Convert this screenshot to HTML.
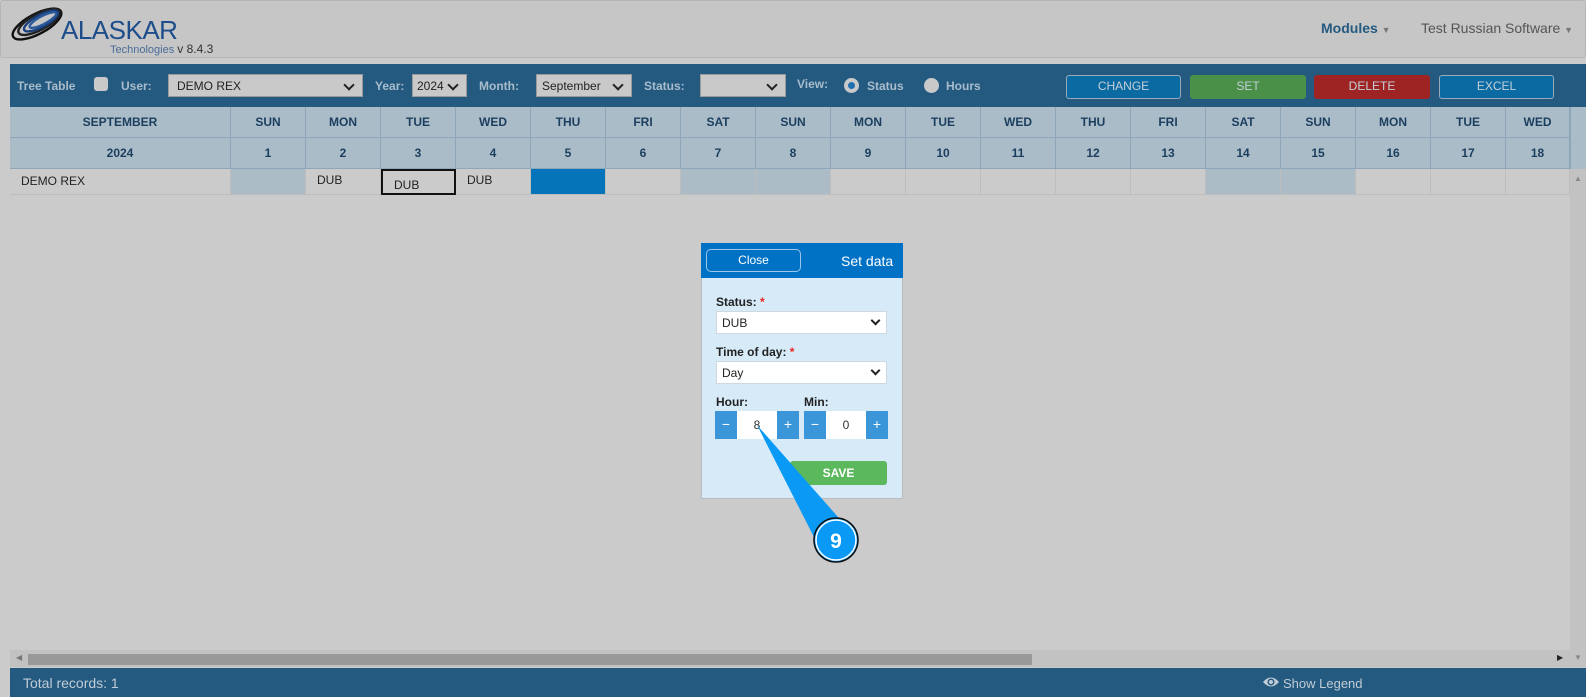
<!DOCTYPE html>
<html><head><meta charset="utf-8"><style>
*{box-sizing:border-box;margin:0;padding:0}
body{width:1586px;height:697px;background:#cbcbcb;font-family:"Liberation Sans",Arial,sans-serif;position:relative;overflow:hidden;font-size:12px}
.a{position:absolute}
.hdr{left:0;top:0;width:1586px;height:58px;background:#c6c6c6;border:1px solid #b5b5b5;border-radius:3px}
.tb{left:10px;top:64px;width:1576px;height:43px;background:#245a80}
.tl{color:#a9bccb;font-weight:bold;font-size:12px;top:79px}
.sel{background:#c9c9c9;border:1px solid #9a9a9a;top:74px;height:23px;font-size:12px;color:#222;padding:4px 8px}
.sel:after{content:"";position:absolute;right:9px;top:6px;width:6px;height:6px;border-right:2px solid #222;border-bottom:2px solid #222;transform:rotate(45deg)}
.btn{top:75px;height:24px;border-radius:3px;color:#c5cfd8;font-size:12px;text-align:center;line-height:20px}
.c{border-right:1px solid #8ea6ba;border-bottom:1px solid #8ea6ba;background:#a9bcc8;color:#1c3e5e;font-weight:bold;font-size:12px;text-align:center}
.d{border-right:1px solid #bdbdbd;border-bottom:1px solid #bdbdbd;font-size:12px;color:#222}
.pl{font-weight:bold;color:#222;font-size:12px}
.ps{background:#fff;border:1px solid #cfd8de;height:23px;padding:4px 5px;font-size:12px;color:#222}
.ps:after{content:"";position:absolute;right:7px;top:5px;width:5px;height:5px;border-right:2px solid #222;border-bottom:2px solid #222;transform:rotate(45deg)}
.pm{background:#3a96d8;color:#fff;text-align:center;line-height:27px;font-size:14px;height:28px}
.pi{background:#fff;text-align:center;line-height:28px;height:28px;color:#333;font-size:12px}
</style></head><body>
<div class="a hdr"></div>
<svg class="a" style="left:9px;top:5px" width="56" height="38" viewBox="0 0 56 38">
<g fill="none" stroke-width="2.4">
<ellipse cx="28" cy="19" rx="27" ry="10" transform="rotate(-28 28 19)" stroke="#111"/>
<ellipse cx="30" cy="17" rx="23" ry="8" transform="rotate(-28 30 17)" stroke="#222"/>
<ellipse cx="32" cy="16" rx="19" ry="6" transform="rotate(-28 32 16)" stroke="#1a3f7a"/>
<ellipse cx="34" cy="15" rx="15" ry="4" transform="rotate(-28 34 15)" stroke="#2a5a9a"/>
</g></svg>
<div class="a" style="left:61px;top:15px;font-size:26px;color:#1d4d8a;letter-spacing:-0.5px">ALASKAR</div>
<div class="a" style="left:110px;top:42px;font-size:11px;color:#4a6c9a">Technologies <span style="color:#333;font-size:12px">v 8.4.3</span></div>
<div class="a" style="left:1321px;top:20px;font-size:14px;font-weight:bold;color:#245a80">Modules <span style="font-size:9px;color:#777">▼</span></div>
<div class="a" style="left:1421px;top:20px;font-size:14px;color:#555">Test Russian Software <span style="font-size:9px;color:#777">▼</span></div>

<div class="a tb"></div>
<div class="a tl" style="left:17px">Tree Table</div>
<div class="a" style="left:94px;top:77px;width:14px;height:14px;background:#c9c9c9;border-radius:3px"></div>
<div class="a tl" style="left:121px">User:</div>
<div class="a sel" style="left:168px;width:195px">DEMO REX</div>
<div class="a tl" style="left:375px">Year:</div>
<div class="a sel" style="left:412px;width:55px;padding-left:4px">2024</div>
<div class="a tl" style="left:479px">Month:</div>
<div class="a sel" style="left:536px;width:96px;padding-left:5px">September</div>
<div class="a tl" style="left:644px">Status:</div>
<div class="a sel" style="left:700px;width:86px"></div>
<div class="a tl" style="left:797px;top:77px">View:</div>
<div class="a" style="left:844px;top:78px;width:15px;height:15px;border-radius:50%;background:#c9c9c9"><div class="a" style="left:4px;top:4px;width:7px;height:7px;border-radius:50%;background:#1f6fb0"></div></div>
<div class="a tl" style="left:867px">Status</div>
<div class="a" style="left:924px;top:78px;width:15px;height:15px;border-radius:50%;background:#c9c9c9"></div>
<div class="a tl" style="left:946px">Hours</div>
<div class="a btn" style="left:1066px;width:115px;background:#0c6aa3;border:1px solid #9ab">CHANGE</div>
<div class="a btn" style="left:1190px;width:116px;background:#4a9048;line-height:22px">SET</div>
<div class="a btn" style="left:1314px;width:116px;background:#9e2424;line-height:22px">DELETE</div>
<div class="a btn" style="left:1439px;width:115px;background:#0c6aa3;border:1px solid #9ab">EXCEL</div>

<div class="a c" style="left:10px;top:107px;width:221px;height:31px;line-height:30px">SEPTEMBER</div>
<div class="a c" style="left:10px;top:138px;width:221px;height:31px;line-height:30px">2024</div>
<div class="a d" style="left:10px;top:169px;width:221px;height:26px;line-height:25px;padding-left:11px">DEMO REX</div>
<div id="cols"></div>
<div class="a" style="left:1570px;top:107px;width:16px;height:62px;background:#a9bcc8;border-left:1px solid #8ea6ba"></div>
<div class="a" style="left:1570px;top:169px;width:16px;height:481px;background:#c2c2c2"></div>
<div class="a" style="left:1574px;top:174px;font-size:8px;color:#888">▲</div>
<div class="a" style="left:10px;top:650px;width:1576px;height:17px;background:#c2c2c2"></div>
<div class="a" style="left:28px;top:654px;width:1004px;height:11px;background:#999"></div>
<div class="a" style="left:16px;top:653px;font-size:8px;color:#777">◀</div>
<div class="a" style="left:1557px;top:653px;font-size:8px;color:#222">▶</div>
<div class="a" style="left:1574px;top:653px;font-size:8px;color:#888">▼</div>
<div class="a" style="left:10px;top:668px;width:1576px;height:29px;background:#245a80"></div>
<div class="a" style="left:23px;top:675px;font-size:14px;color:#c0ccd6">Total records: 1</div>
<svg class="a" style="left:1262px;top:676px" width="18" height="12" viewBox="0 0 18 12"><path d="M1 6Q9 -3 17 6Q9 15 1 6Z" fill="#c0ccd6"/><circle cx="9" cy="6" r="3.5" fill="#245a80"/><circle cx="9" cy="6" r="2" fill="#c0ccd6"/></svg>
<div class="a" style="left:1283px;top:676px;font-size:13px;color:#c0ccd6">Show Legend</div>

<div class="a" style="left:701px;top:243px;width:202px;height:256px;background:#d6eaf8;border:1px solid #bbb"></div>
<div class="a" style="left:701px;top:243px;width:202px;height:35px;background:#0072c6"></div>
<div class="a" style="left:706px;top:249px;width:95px;height:23px;border:1px solid #9cc7ea;border-radius:5px;color:#fff;font-size:12px;text-align:center;line-height:20px">Close</div>
<div class="a" style="left:841px;top:253px;color:#fff;font-size:14px">Set data</div>
<div class="a pl" style="left:716px;top:295px">Status: <span style="color:#e22">*</span></div>
<div class="a ps" style="left:716px;top:311px;width:171px">DUB</div>
<div class="a pl" style="left:716px;top:345px">Time of day: <span style="color:#e22">*</span></div>
<div class="a ps" style="left:716px;top:361px;width:171px">Day</div>
<div class="a pl" style="left:716px;top:395px">Hour:</div>
<div class="a pl" style="left:804px;top:395px">Min:</div>
<div class="a pm" style="left:715px;top:411px;width:22px">−</div>
<div class="a pi" style="left:737px;top:411px;width:40px">8</div>
<div class="a pm" style="left:777px;top:411px;width:22px">+</div>
<div class="a pm" style="left:804px;top:411px;width:22px">−</div>
<div class="a pi" style="left:826px;top:411px;width:40px">0</div>
<div class="a pm" style="left:866px;top:411px;width:22px">+</div>
<div class="a" style="left:790px;top:461px;width:97px;height:24px;background:#5cb85c;border-radius:3px;color:#fff;font-weight:bold;font-size:12px;text-align:center;line-height:24px">SAVE</div>
<svg class="a" style="left:0;top:0" width="1586" height="697"><path d="M757 425L845 525L818 545Z" fill="#0a9af5"/><circle cx="836" cy="540" r="22" fill="#0a9af5" stroke="#111" stroke-width="1.5"/><circle cx="836" cy="540" r="20" fill="none" stroke="#fff" stroke-width="1.5"/><text x="836" y="548" fill="#fff" font-family="Liberation Sans" font-weight="bold" font-size="21" text-anchor="middle">9</text></svg>
<script>
var days=["SUN","MON","TUE","WED","THU","FRI","SAT"],h="";
for(var i=0;i<18;i++){var x=231+75*i,w=i==17?64:75;
h+='<div class="a c" style="left:'+x+'px;top:107px;width:'+w+'px;height:31px;line-height:30px">'+days[i%7]+'</div>';
h+='<div class="a c" style="left:'+x+'px;top:138px;width:'+w+'px;height:31px;line-height:30px">'+(i+1)+'</div>';
var bg=(i%7==0||i%7==6)?'#abbcc7':'#cbcbcb',t='',ex='';
if(i==4)bg='#0574b8';
if(i>=1&&i<=3)t='DUB';
if(i==2)ex='border:2px solid #111;padding-top:3px;';
h+='<div class="a d" style="left:'+x+'px;top:169px;width:'+w+'px;height:26px;line-height:22px;padding-left:11px;background:'+bg+';'+ex+'">'+t+'</div>';}
document.getElementById('cols').innerHTML=h;
</script>
</body></html>
